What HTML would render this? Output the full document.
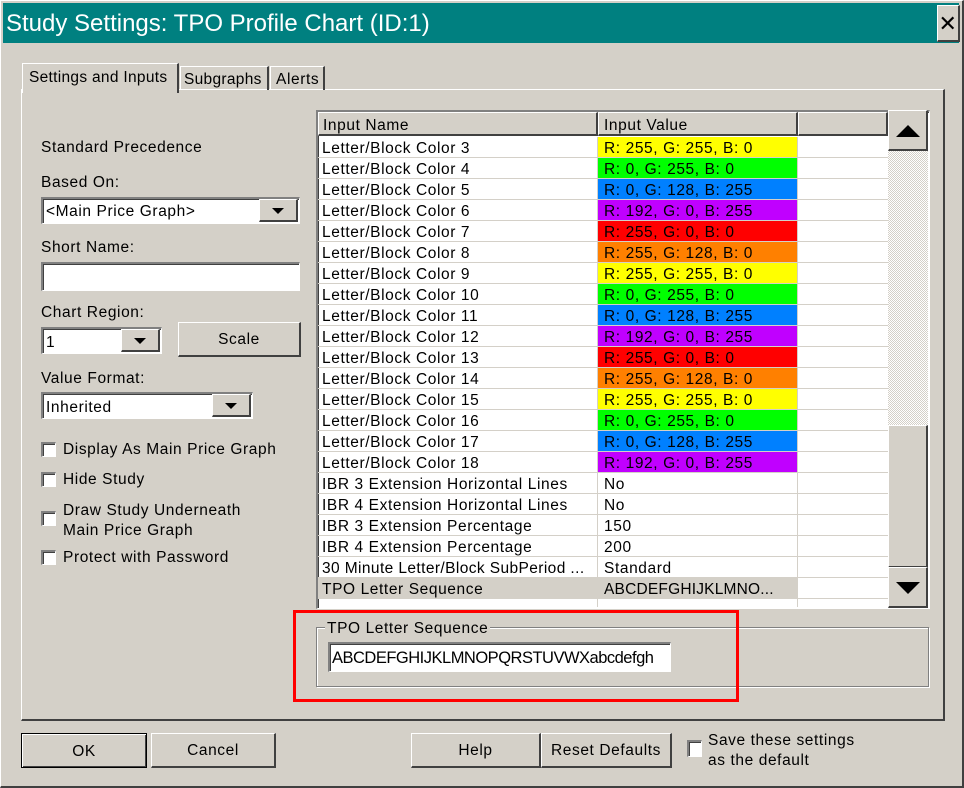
<!DOCTYPE html>
<html><head><meta charset="utf-8"><style>
*{box-sizing:border-box;margin:0;padding:0}
body{width:964px;height:788px;background:#d4d0c8;font-family:"Liberation Sans",sans-serif;font-size:15.5px;color:#000;position:relative;overflow:hidden;letter-spacing:0.6px}
.a{position:absolute}
.t{margin-top:2px}
.win{left:0;top:0;width:964px;height:788px;border:1px solid #fff;border-right:2px solid #404040;border-bottom:2px solid #404040}
.title{left:3px;top:3px;width:956px;height:40px;background:#008080;color:#fff;font-size:24px;line-height:42px;padding-left:3px;letter-spacing:0}
.raised{background:#d4d0c8;border:1px solid #fff;border-right:2px solid #404040;border-bottom:2px solid #404040}
.sunk{background:#fff;border:2px solid #808080;border-right:1px solid #fff;border-bottom:1px solid #fff;box-shadow:inset 1px 1px 0 #404040}
.btn{display:flex;align-items:center;justify-content:center;padding-top:2px}
.tri{width:0;height:0;border-left:6px solid transparent;border-right:6px solid transparent;border-top:6px solid #000}
.cb{width:15px;height:15px}
.row{position:absolute;left:318px;width:570px;height:21px;border-bottom:1px solid #d4d0c8}
.row div{position:absolute;top:0;height:20px;line-height:23px}
.c1{left:4px;width:275px}
.c2{left:280px;width:199px;padding-left:6px}
.c3{left:480px;width:90px}
.row .sep1{left:279px;width:1px;background:#d4d0c8}
.row .sep2{left:479px;width:1px;background:#d4d0c8}
</style></head><body>
<div class="a win"></div>
<div class="a title">Study Settings: TPO Profile Chart (ID:1)</div>
<div class="a raised btn" style="left:937px;top:5px;width:23px;height:37px;font-size:22px">✕</div>

<!-- tabs -->
<div class="a raised" style="left:21px;top:89px;width:924px;height:632px"></div>
<div class="a" style="left:22px;top:63px;width:157px;height:30px;background:#d4d0c8;border:1px solid #fff;border-bottom:none;border-right:2px solid #404040;padding:5px 0 0 6px;letter-spacing:0.3px">Settings and Inputs</div>
<div class="a" style="left:180px;top:66px;width:89px;height:24px;border:1px solid #fff;border-bottom:none;border-right:2px solid #404040;padding:4px 0 0 3px;letter-spacing:0.3px">Subgraphs</div>
<div class="a" style="left:270px;top:66px;width:55px;height:24px;border:1px solid #fff;border-bottom:none;border-right:2px solid #404040;padding:4px 0 0 5px">Alerts</div>

<!-- left -->
<div class="a" style="left:41px;top:139px">Standard Precedence</div>
<div class="a" style="left:41px;top:174px">Based On:</div>
<div class="a sunk" style="left:41px;top:197px;width:259px;height:27px;padding:4px 0 0 3px">&lt;Main Price Graph&gt;</div>
<div class="a raised btn" style="left:259px;top:199px;width:39px;height:23px"><div class="tri"></div></div>
<div class="a" style="left:41px;top:239px">Short Name:</div>
<div class="a sunk" style="left:41px;top:262px;width:259px;height:29px"></div>
<div class="a" style="left:41px;top:304px">Chart Region:</div>
<div class="a sunk" style="left:41px;top:327px;width:121px;height:27px;padding:5px 0 0 3px">1</div>
<div class="a raised btn" style="left:121px;top:329px;width:39px;height:23px"><div class="tri"></div></div>
<div class="a raised btn" style="left:178px;top:322px;width:123px;height:35px">Scale</div>
<div class="a" style="left:41px;top:370px">Value Format:</div>
<div class="a sunk" style="left:41px;top:392px;width:212px;height:27px;padding:5px 0 0 3px">Inherited</div>
<div class="a raised btn" style="left:212px;top:394px;width:39px;height:23px"><div class="tri"></div></div>
<div class="a sunk cb" style="left:41px;top:442px"></div><div class="a" style="left:63px;top:441px">Display As Main Price Graph</div>
<div class="a sunk cb" style="left:41px;top:472px"></div><div class="a" style="left:63px;top:471px">Hide Study</div>
<div class="a sunk cb" style="left:41px;top:511px"></div><div class="a" style="left:63px;top:501px;line-height:20px">Draw Study Underneath<br>Main Price Graph</div>
<div class="a sunk cb" style="left:41px;top:550px"></div><div class="a" style="left:63px;top:549px">Protect with Password</div>

<!-- grid -->
<div class="a" style="left:316px;top:110px;width:614px;height:499px;background:#fff;border:2px solid #808080;border-right:1px solid #fff;border-bottom:1px solid #fff;box-shadow:inset 1px 1px 0 #404040"></div>
<div class="a raised" style="left:318px;top:112px;width:280px;height:24px;padding:4px 0 0 4px">Input Name</div>
<div class="a raised" style="left:598px;top:112px;width:200px;height:24px;padding:4px 0 0 5px">Input Value</div>
<div class="a raised" style="left:798px;top:112px;width:90px;height:24px"></div>
<div class="row" style="top:137px"><div class="c1">Letter/Block Color 3</div><div class="c2" style="background:#ffff00">R: 255, G: 255, B: 0</div><div class="sep1"></div><div class="sep2"></div></div>
<div class="row" style="top:158px"><div class="c1">Letter/Block Color 4</div><div class="c2" style="background:#00ff00">R: 0, G: 255, B: 0</div><div class="sep1"></div><div class="sep2"></div></div>
<div class="row" style="top:179px"><div class="c1">Letter/Block Color 5</div><div class="c2" style="background:#0080ff">R: 0, G: 128, B: 255</div><div class="sep1"></div><div class="sep2"></div></div>
<div class="row" style="top:200px"><div class="c1">Letter/Block Color 6</div><div class="c2" style="background:#c000ff">R: 192, G: 0, B: 255</div><div class="sep1"></div><div class="sep2"></div></div>
<div class="row" style="top:221px"><div class="c1">Letter/Block Color 7</div><div class="c2" style="background:#ff0000">R: 255, G: 0, B: 0</div><div class="sep1"></div><div class="sep2"></div></div>
<div class="row" style="top:242px"><div class="c1">Letter/Block Color 8</div><div class="c2" style="background:#ff8000">R: 255, G: 128, B: 0</div><div class="sep1"></div><div class="sep2"></div></div>
<div class="row" style="top:263px"><div class="c1">Letter/Block Color 9</div><div class="c2" style="background:#ffff00">R: 255, G: 255, B: 0</div><div class="sep1"></div><div class="sep2"></div></div>
<div class="row" style="top:284px"><div class="c1">Letter/Block Color 10</div><div class="c2" style="background:#00ff00">R: 0, G: 255, B: 0</div><div class="sep1"></div><div class="sep2"></div></div>
<div class="row" style="top:305px"><div class="c1">Letter/Block Color 11</div><div class="c2" style="background:#0080ff">R: 0, G: 128, B: 255</div><div class="sep1"></div><div class="sep2"></div></div>
<div class="row" style="top:326px"><div class="c1">Letter/Block Color 12</div><div class="c2" style="background:#c000ff">R: 192, G: 0, B: 255</div><div class="sep1"></div><div class="sep2"></div></div>
<div class="row" style="top:347px"><div class="c1">Letter/Block Color 13</div><div class="c2" style="background:#ff0000">R: 255, G: 0, B: 0</div><div class="sep1"></div><div class="sep2"></div></div>
<div class="row" style="top:368px"><div class="c1">Letter/Block Color 14</div><div class="c2" style="background:#ff8000">R: 255, G: 128, B: 0</div><div class="sep1"></div><div class="sep2"></div></div>
<div class="row" style="top:389px"><div class="c1">Letter/Block Color 15</div><div class="c2" style="background:#ffff00">R: 255, G: 255, B: 0</div><div class="sep1"></div><div class="sep2"></div></div>
<div class="row" style="top:410px"><div class="c1">Letter/Block Color 16</div><div class="c2" style="background:#00ff00">R: 0, G: 255, B: 0</div><div class="sep1"></div><div class="sep2"></div></div>
<div class="row" style="top:431px"><div class="c1">Letter/Block Color 17</div><div class="c2" style="background:#0080ff">R: 0, G: 128, B: 255</div><div class="sep1"></div><div class="sep2"></div></div>
<div class="row" style="top:452px"><div class="c1">Letter/Block Color 18</div><div class="c2" style="background:#c000ff">R: 192, G: 0, B: 255</div><div class="sep1"></div><div class="sep2"></div></div>
<div class="row" style="top:473px"><div class="c1">IBR 3 Extension Horizontal Lines</div><div class="c2">No</div><div class="sep1"></div><div class="sep2"></div></div>
<div class="row" style="top:494px"><div class="c1">IBR 4 Extension Horizontal Lines</div><div class="c2">No</div><div class="sep1"></div><div class="sep2"></div></div>
<div class="row" style="top:515px"><div class="c1">IBR 3 Extension Percentage</div><div class="c2">150</div><div class="sep1"></div><div class="sep2"></div></div>
<div class="row" style="top:536px"><div class="c1">IBR 4 Extension Percentage</div><div class="c2">200</div><div class="sep1"></div><div class="sep2"></div></div>
<div class="row" style="top:557px"><div class="c1" style="letter-spacing:0.4px">30 Minute Letter/Block SubPeriod ...</div><div class="c2">Standard</div><div class="sep1"></div><div class="sep2"></div></div>
<div class="row" style="top:578px;background:#d4d0c8"><div class="c1">TPO Letter Sequence</div><div class="c2" style="letter-spacing:0.2px">ABCDEFGHIJKLMNO...</div><div class="c3" style="background:#fff"></div><div class="sep2"></div></div>
<div class="row" style="top:599px;height:8px;border:none"><div class="sep1" style="height:8px"></div><div class="sep2" style="height:8px"></div></div>

<!-- scrollbar -->
<div class="a" style="left:888px;top:150px;width:40px;height:276px;background:repeating-conic-gradient(#fff 0 25%,#d4d0c8 0 50%) 0 0/2px 2px"></div>
<div class="a raised btn" style="left:888px;top:110px;width:40px;height:41px"><div class="tri" style="border-top:none;border-bottom:12px solid #000;border-left-width:12px;border-right-width:12px"></div></div>
<div class="a raised" style="left:888px;top:425px;width:40px;height:143px"></div>
<div class="a raised btn" style="left:888px;top:567px;width:40px;height:41px"><div class="tri" style="border-top-width:12px;border-left-width:12px;border-right-width:12px"></div></div>

<!-- group -->
<div class="a" style="left:316px;top:627px;width:613px;height:60px;border:1px solid #808080;box-shadow:1px 1px 0 #fff,inset 1px 1px 0 #fff"></div>
<div class="a" style="left:325px;top:620px;background:#d4d0c8;padding:0 2px">TPO Letter Sequence</div>
<div class="a sunk" style="left:328px;top:642px;width:343px;height:30px;padding:5px 0 0 2px;font-size:16.5px;letter-spacing:-0.5px;overflow:hidden;white-space:nowrap">ABCDEFGHIJKLMNOPQRSTUVWXabcdefgh</div>
<div class="a" style="left:293px;top:610px;width:446px;height:92px;border:3px solid #ff0000"></div>

<!-- bottom -->
<div class="a raised btn" style="left:21px;top:733px;width:126px;height:35px;border:1px solid #000;box-shadow:inset 1px 1px 0 #fff,inset -1px -1px 0 #404040">OK</div>
<div class="a raised btn" style="left:151px;top:733px;width:125px;height:35px">Cancel</div>
<div class="a raised btn" style="left:411px;top:733px;width:130px;height:35px">Help</div>
<div class="a raised btn" style="left:541px;top:733px;width:131px;height:35px">Reset Defaults</div>
<div class="a sunk" style="left:687px;top:740px;width:15px;height:17px"></div>
<div class="a" style="left:708px;top:731px;line-height:20px">Save these settings<br>as the default</div>
</body></html>
